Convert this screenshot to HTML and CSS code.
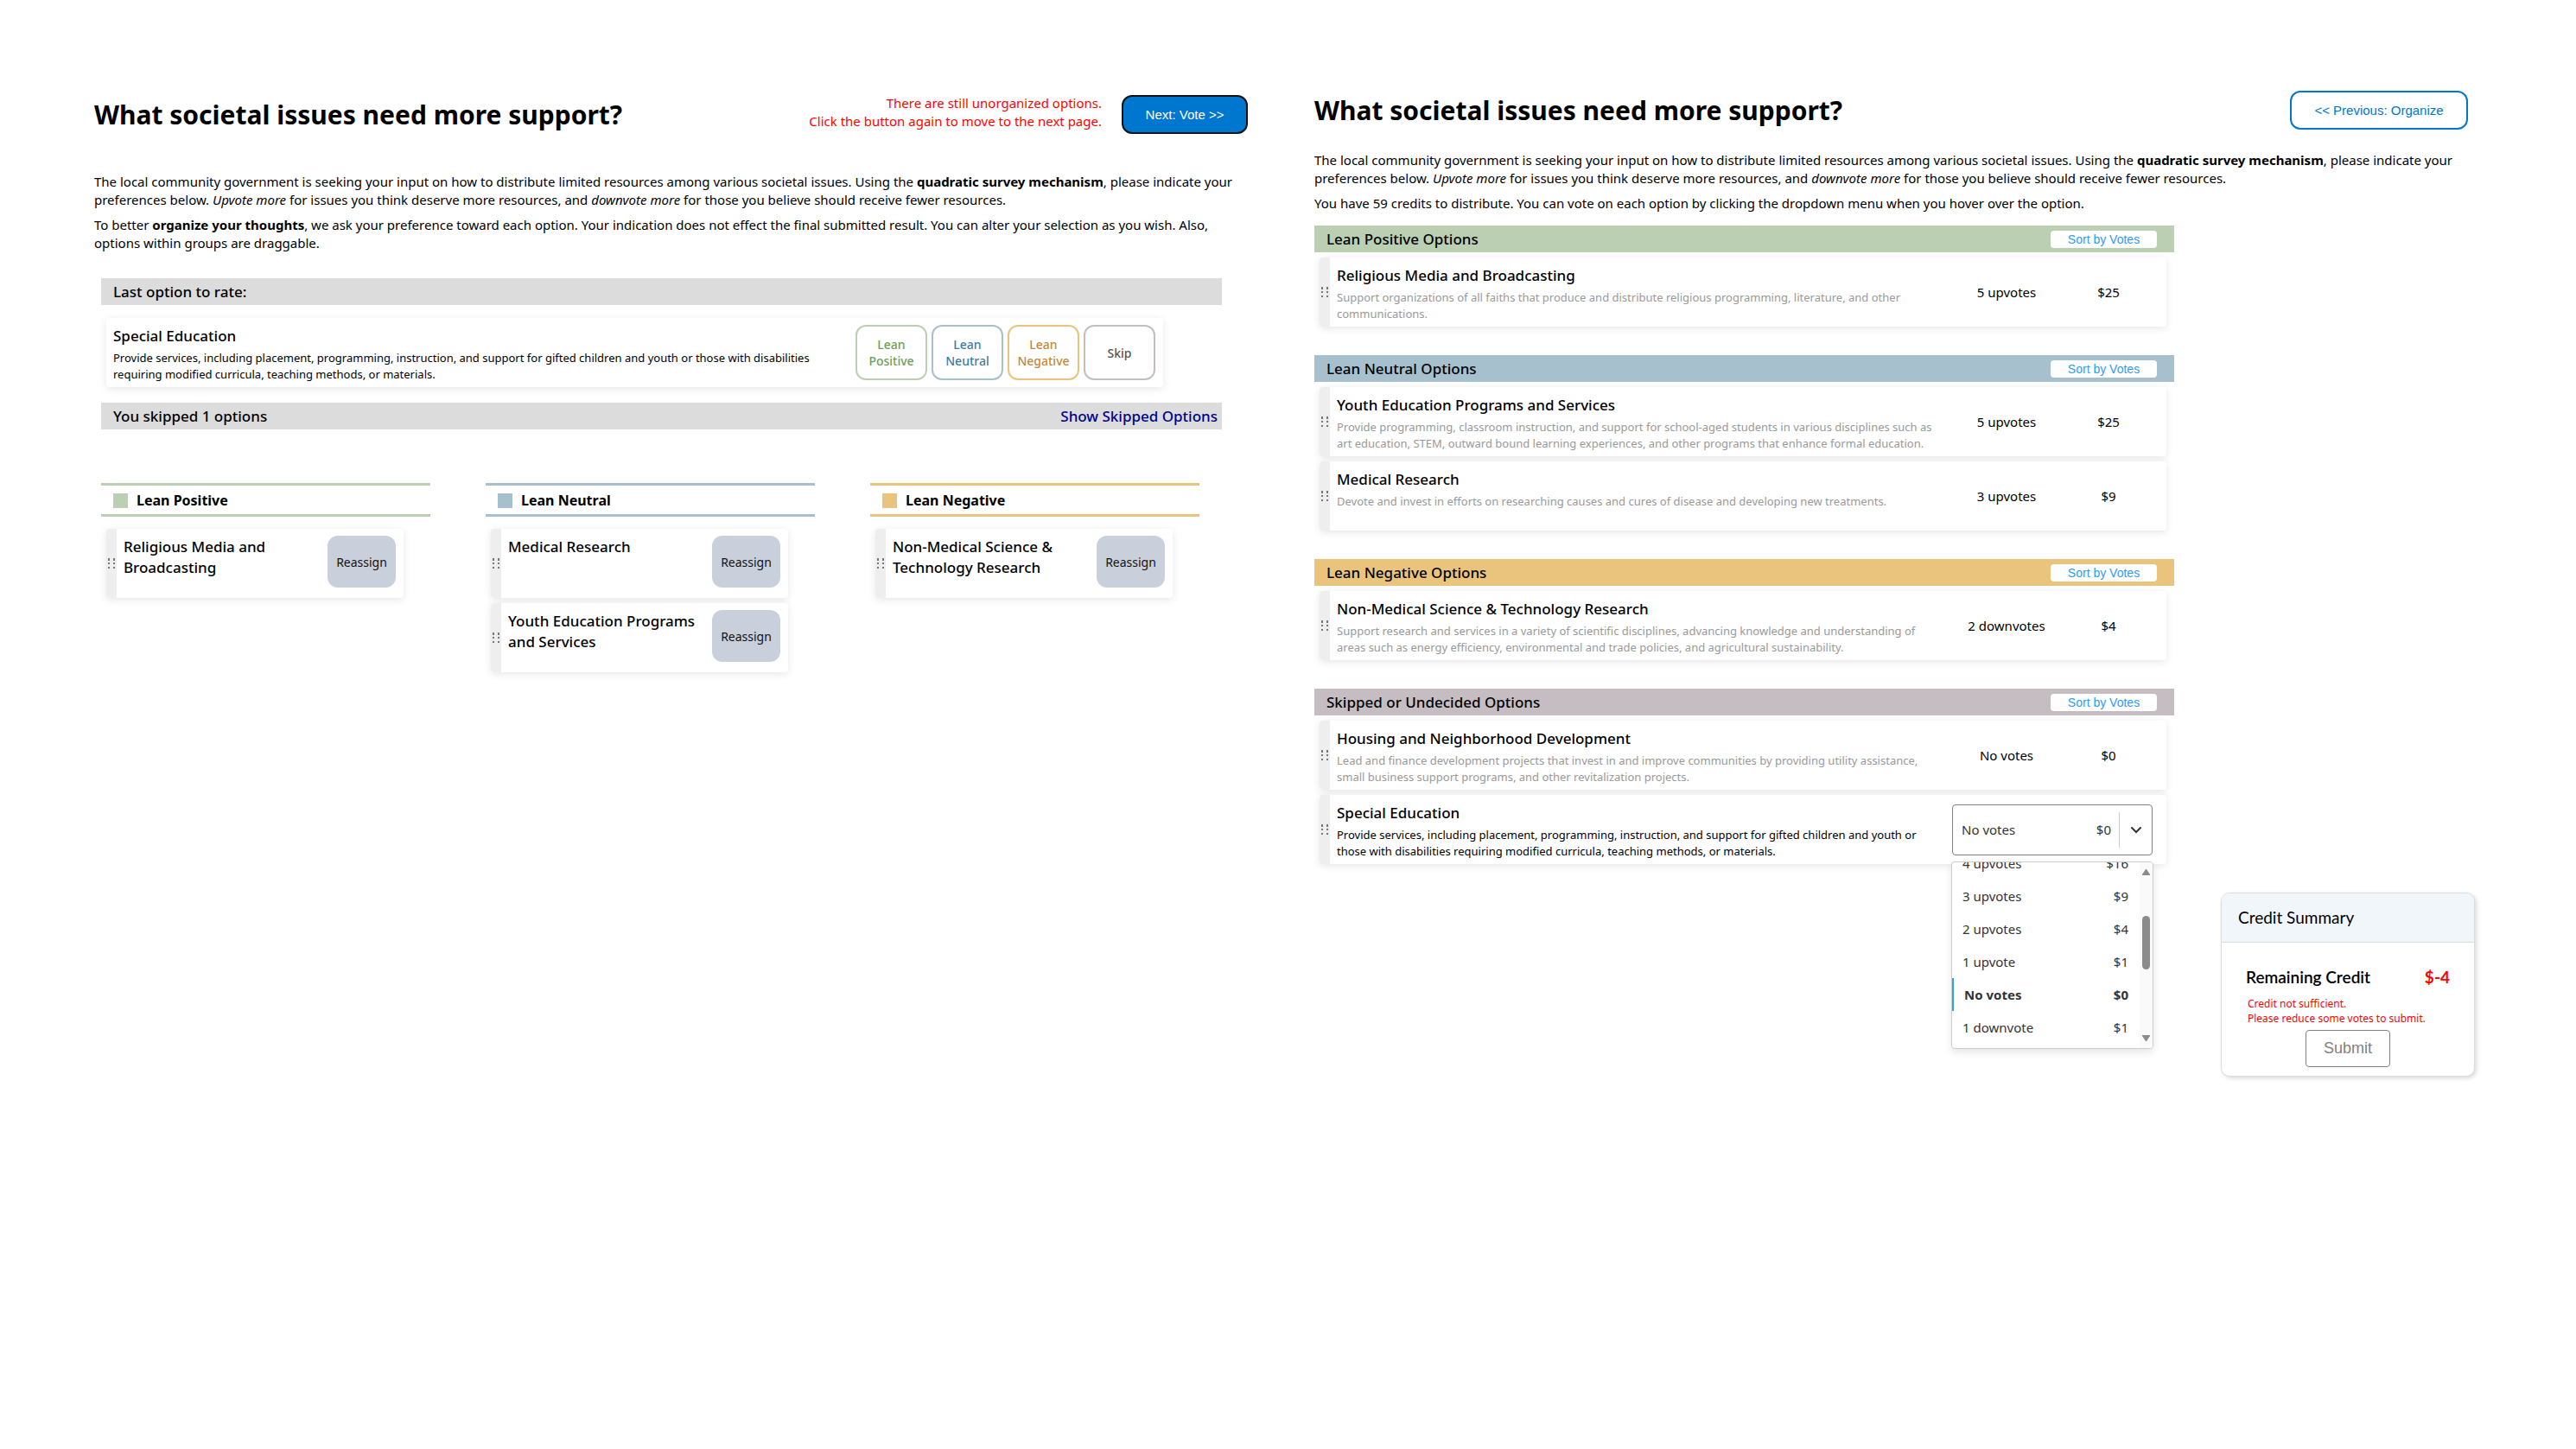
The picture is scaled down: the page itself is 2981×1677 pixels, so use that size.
FILE: index.html
```html
<!DOCTYPE html>
<html lang="en">
<head>
<meta charset="utf-8">
<title>Quadratic survey: organize and vote</title>
<link rel="stylesheet" href="styles.css">
</head>
<body>
<svg class="defs" aria-hidden="true">
  <symbol id="grip" viewBox="0 0 8 12">
    <path d="M0 0h2v3H0zM6 0h2v3H6zM0 5h2v2H0zM6 5h2v2H6zM0 10h2v2H0zM6 10h2v2H6z"/>
  </symbol>
</svg>
<div class="page">

  <section class="panel organize">
    <header class="panel-head">
      <h1>What societal issues need more support?</h1>
      <p class="warning" role="alert">There are still unorganized options.<br>Click the button again to move to the next page.</p>
      <button type="button" class="nav-btn nav-next">Next: Vote &gt;&gt;</button>
    </header>
    <div class="intro">
      <p>The local community government is seeking your input on how to distribute limited resources among various societal issues. Using the <b>quadratic survey mechanism</b>, please indicate your preferences below. <i>Upvote more</i> for issues you think deserve more resources, and <i>downvote more</i> for those you believe should receive fewer resources.</p>
      <p>To better <b>organize your thoughts</b>, we ask your preference toward each option. Your indication does not effect the final submitted result. You can alter your selection as you wish. Also, options within groups are draggable.</p>
    </div>

    <div class="board">
      <h2 class="bar">Last option to rate:</h2>
      <article class="card rate-card">
        <div class="card-text">
          <h3>Special Education</h3>
          <p>Provide services, including placement, programming, instruction, and support for gifted children and youth or those with disabilities requiring modified curricula, teaching methods, or materials.</p>
        </div>
        <div class="choices">
          <button type="button" class="choice positive">Lean Positive</button>
          <button type="button" class="choice neutral">Lean Neutral</button>
          <button type="button" class="choice negative">Lean Negative</button>
          <button type="button" class="choice skip">Skip</button>
        </div>
      </article>
      <div class="bar"><span>You skipped 1 options</span><a href="#skipped">Show Skipped Options</a></div>

      <div class="groups">
        <section class="group positive">
          <h2>Lean Positive</h2>
          <article class="card">
            <span class="handle"><svg><use href="#grip"/></svg></span>
            <div class="card-text"><h3>Religious Media and Broadcasting</h3></div>
            <button type="button" class="reassign">Reassign</button>
          </article>
        </section>
        <section class="group neutral">
          <h2>Lean Neutral</h2>
          <article class="card">
            <span class="handle"><svg><use href="#grip"/></svg></span>
            <div class="card-text"><h3>Medical Research</h3></div>
            <button type="button" class="reassign">Reassign</button>
          </article>
          <article class="card">
            <span class="handle"><svg><use href="#grip"/></svg></span>
            <div class="card-text"><h3>Youth Education Programs and Services</h3></div>
            <button type="button" class="reassign">Reassign</button>
          </article>
        </section>
        <section class="group negative">
          <h2>Lean Negative</h2>
          <article class="card">
            <span class="handle"><svg><use href="#grip"/></svg></span>
            <div class="card-text"><h3>Non-Medical Science &amp; Technology Research</h3></div>
            <button type="button" class="reassign">Reassign</button>
          </article>
        </section>
      </div>
    </div>
  </section>

  <section class="panel vote">
    <header class="panel-head">
      <h1>What societal issues need more support?</h1>
      <button type="button" class="nav-btn nav-prev">&lt;&lt; Previous: Organize</button>
    </header>
    <div class="intro">
      <p>The local community government is seeking your input on how to distribute limited resources among various societal issues. Using the <b>quadratic survey mechanism</b>, please indicate your preferences below. <i>Upvote more</i> for issues you think deserve more resources, and <i>downvote more</i> for those you believe should receive fewer resources.</p>
      <p>You have 59 credits to distribute. You can vote on each option by clicking the dropdown menu when you hover over the option.</p>
    </div>

    <div class="vote-body">
      <div class="vote-lists">
        <section class="vote-group positive">
          <header class="bar"><h2>Lean Positive Options</h2><button type="button" class="sort">Sort by Votes</button></header>
          <article class="card">
            <span class="handle"><svg><use href="#grip"/></svg></span>
            <div class="card-text">
              <h3>Religious Media and Broadcasting</h3>
              <p>Support organizations of all faiths that produce and distribute religious programming, literature, and other communications.</p>
            </div>
            <div class="tally"><span>5 upvotes</span><span>$25</span></div>
          </article>
        </section>

        <section class="vote-group neutral">
          <header class="bar"><h2>Lean Neutral Options</h2><button type="button" class="sort">Sort by Votes</button></header>
          <article class="card">
            <span class="handle"><svg><use href="#grip"/></svg></span>
            <div class="card-text">
              <h3>Youth Education Programs and Services</h3>
              <p>Provide programming, classroom instruction, and support for school-aged students in various disciplines such as art education, STEM, outward bound learning experiences, and other programs that enhance formal education.</p>
            </div>
            <div class="tally"><span>5 upvotes</span><span>$25</span></div>
          </article>
          <article class="card">
            <span class="handle"><svg><use href="#grip"/></svg></span>
            <div class="card-text">
              <h3>Medical Research</h3>
              <p>Devote and invest in efforts on researching causes and cures of disease and developing new treatments.</p>
            </div>
            <div class="tally"><span>3 upvotes</span><span>$9</span></div>
          </article>
        </section>

        <section class="vote-group negative">
          <header class="bar"><h2>Lean Negative Options</h2><button type="button" class="sort">Sort by Votes</button></header>
          <article class="card">
            <span class="handle"><svg><use href="#grip"/></svg></span>
            <div class="card-text">
              <h3>Non-Medical Science &amp; Technology Research</h3>
              <p>Support research and services in a variety of scientific disciplines, advancing knowledge and understanding of areas such as energy efficiency, environmental and trade policies, and agricultural sustainability.</p>
            </div>
            <div class="tally"><span>2 downvotes</span><span>$4</span></div>
          </article>
        </section>

        <section class="vote-group skip">
          <header class="bar"><h2>Skipped or Undecided Options</h2><button type="button" class="sort">Sort by Votes</button></header>
          <article class="card">
            <span class="handle"><svg><use href="#grip"/></svg></span>
            <div class="card-text">
              <h3>Housing and Neighborhood Development</h3>
              <p>Lead and finance development projects that invest in and improve communities by providing utility assistance, small business support programs, and other revitalization projects.</p>
            </div>
            <div class="tally"><span>No votes</span><span>$0</span></div>
          </article>
          <article class="card active">
            <span class="handle"><svg><use href="#grip"/></svg></span>
            <div class="card-text">
              <h3>Special Education</h3>
              <p>Provide services, including placement, programming, instruction, and support for gifted children and youth or those with disabilities requiring modified curricula, teaching methods, or materials.</p>
            </div>
            <div class="picker">
              <div class="picker-box">
                <select aria-label="Votes for Special Education"><option>No votes</option></select>
                <output>$0</output>
                <span class="picker-arrow"><svg viewBox="0 0 12 8" width="12" height="8"><path d="M1 1l5 5 5-5"/></svg></span>
              </div>
              <div class="menu">
                <ul role="listbox" aria-label="Vote choices">
                  <li role="option"><span>4 upvotes</span><span>$16</span></li>
                  <li role="option"><span>3 upvotes</span><span>$9</span></li>
                  <li role="option"><span>2 upvotes</span><span>$4</span></li>
                  <li role="option"><span>1 upvote</span><span>$1</span></li>
                  <li role="option" aria-selected="true"><span>No votes</span><span>$0</span></li>
                  <li role="option"><span>1 downvote</span><span>$1</span></li>
                </ul>
                <div class="scrollbar" aria-hidden="true">
                  <svg viewBox="0 0 9 7" width="9" height="7"><path d="M4 0h1l4 6v1H0V6z"/></svg>
                  <i class="thumb"></i>
                  <svg viewBox="0 0 9 7" width="9" height="7"><path d="M0 0h9v1L5 7H4L0 1z"/></svg>
                </div>
              </div>
            </div>
          </article>
        </section>
      </div>

      <aside class="summary">
        <h2>Credit Summary</h2>
        <div class="summary-body">
          <div class="remaining"><span>Remaining Credit</span><strong>$-4</strong></div>
          <p role="alert">Credit not sufficient.<br>Please reduce some votes to submit.</p>
          <button type="submit" class="submit">Submit</button>
        </div>
      </aside>
    </div>
  </section>

</div>
</body>
</html>
```
FILE: styles.css
```css
* { box-sizing: border-box; }
body {
  margin: 0;
  background: #fff;
  color: #000;
  font: 15px/21px "Noto Sans", "Open Sans", sans-serif;
}
h1, h2, h3, p, ul { margin: 0; padding: 0; }
button { font: inherit; margin: 0; padding: 0; cursor: pointer; }
.defs { display: none; }

.positive { --tone: #bbcfb2; --ink: #6ba05a; }
.neutral { --tone: #a6c0cd; --ink: #3a7ca5; }
.negative { --tone: #eac47c; --ink: #bf8a3c; }
.skip { --tone: #c5bdc1; --ink: #555; }

.page {
  display: grid;
  grid-template-columns: minmax(0, 1fr) minmax(0, 1fr);
  gap: 77px;
  padding: 105px 125px 60px 109px;
}
.organize { padding-top: 4px; }

/* Panel heading */
.panel-head { display: flex; align-items: center; min-height: 45px; }
h1 { flex: 1; font-size: 30px; line-height: 45px; font-weight: 700; }
.warning { color: #f00; text-align: right; padding-bottom: 4px; margin-right: 23px; }
.nav-btn {
  height: 45px;
  border: 2px solid #0077cf;
  border-radius: 12px;
  font: 15px "Liberation Sans", Arial, sans-serif;
}
.nav-next { width: 146px; background: #0077cf; border-color: #111; color: #fff; }
.nav-prev { width: 206px; background: #fff; color: #0077cf; }

.intro { display: grid; gap: 8px; }
.organize .intro { padding: 45px 0 30px; }
.vote .intro { padding: 25px 0 15px; }

/* Bars and cards */
.bar {
  display: flex;
  align-items: center;
  justify-content: space-between;
  height: 31px;
  padding: 0 5px 0 14px;
  background: #dcdcdc;
  font-size: 17px;
  font-weight: 500;
}
.bar a { color: #00008b; text-decoration: none; }
.card {
  display: flex;
  min-height: 80px;
  background: #fff;
  border-radius: 4px;
  box-shadow: 0 2px 10px rgba(0, 0, 0, .1);
}
.card-text { flex: 1; min-width: 0; padding: 9px 8px 0; }
.card h3 { font-size: 17px; line-height: 24px; font-weight: 500; }
.card p { font-size: 13px; line-height: 19px; margin-top: 4px; }
.handle {
  display: flex;
  align-items: center;
  justify-content: center;
  width: 12px;
  background: #eee;
  border-radius: 4px 0 0 4px;
}
.handle svg { width: 8px; height: 12px; fill: #777; }

/* Organize panel */
.board { margin: 0 30px 0 8px; }
.rate-card { margin: 15px 68px 18px 6px; padding-right: 9px; }
.rate-card .card-text { padding-right: 34px; }
.choices { display: flex; gap: 5px; align-self: center; }
.choice {
  width: 83px;
  height: 64px;
  background: #fff;
  border: 2px solid var(--tone);
  border-radius: 12px;
  color: var(--ink);
  font-size: 14px;
  line-height: 19px;
  font-weight: 500;
}
.groups {
  display: grid;
  grid-template-columns: repeat(3, minmax(0, 1fr));
  gap: 64px;
  margin: 62px 26px 0 0;
}
.group h2 {
  display: flex;
  align-items: center;
  gap: 10px;
  height: 39px;
  margin-bottom: 14px;
  padding: 2px 0 0 14px;
  border: solid var(--tone);
  border-width: 3px 0;
  font-size: 16px;
  font-weight: 700;
}
.group h2::before { content: ""; width: 17px; height: 17px; background: var(--tone); }
.group .card { margin: 0 31px 6px 6px; }
.reassign {
  width: 79px;
  height: 60px;
  margin: 8px 9px 0 0;
  border: 0;
  border-radius: 12px;
  background: #cacfdc;
  color: #111;
  font-size: 14px;
}

/* Vote panel */
.vote-body {
  display: grid;
  grid-template-columns: minmax(0, 1fr) 294px;
  gap: 54px;
  margin-right: -8px;
}
.vote-lists { display: grid; gap: 33px; padding-bottom: 246px; }
.vote-group { display: grid; gap: 6px; }
.vote-group .bar { background: var(--tone); padding-right: 20px; }
.bar h2 { font-size: 17px; font-weight: 500; }
.sort {
  width: 123px;
  height: 20px;
  border: 0;
  border-radius: 4px;
  background: #fff;
  color: #2b9cf5;
  font: 14px "Liberation Sans", Arial, sans-serif;
}
.vote-group .card { margin: 0 9px 0 6px; }
.vote-group .card-text { padding-right: 13px; }
.vote-group p { color: #999; }
.vote-group .active p { color: #000; }
.tally {
  display: grid;
  grid-template-columns: 130px 106px;
  align-items: center;
  margin-right: 14px;
  text-align: center;
}
.picker { position: relative; width: 232px; margin: 11px 16px 0 4px; color: #333; }
.picker-box {
  display: flex;
  align-items: center;
  height: 59px;
  border: 1px solid #808080;
  border-radius: 4px;
}
.picker select {
  flex: 1;
  appearance: none;
  border: 0;
  margin: 0;
  padding: 0 0 0 10px;
  background: none;
  color: inherit;
  font: inherit;
}
.picker-arrow {
  display: flex;
  align-items: center;
  justify-content: center;
  width: 38px;
  height: 41px;
  margin-left: 9px;
  border-left: 1px solid #ccc;
}
.picker-arrow path { fill: none; stroke: #333; stroke-width: 2; stroke-linecap: round; }
.menu {
  position: absolute;
  z-index: 1;
  top: 66px;
  left: -1px;
  right: -1px;
  display: flex;
  height: 217px;
  overflow: hidden;
  background: #fff;
  border: 1px solid #ccc;
  border-radius: 4px;
  box-shadow: 0 4px 10px rgba(0, 0, 0, .1);
}
.menu ul { flex: 1; list-style: none; margin-top: -18px; }
.menu li {
  display: flex;
  align-items: center;
  justify-content: space-between;
  height: 38px;
  padding: 0 13px 0 12px;
}
.menu [aria-selected] { border-left: 2px solid #2aa3f7; font-weight: 700; }
.scrollbar {
  display: flex;
  flex-direction: column;
  align-items: center;
  justify-content: space-between;
  width: 15px;
  padding: 8px 0;
  background: #fafafa;
}
.scrollbar svg { fill: #8b8b8b; }
.thumb { width: 9px; height: 62px; margin-bottom: 30px; border-radius: 5px; background: #8b8b8b; }

/* Credit summary */
.summary {
  align-self: end;
  border: 1px solid #dcdcdc;
  border-radius: 10px;
  overflow: hidden;
  background: #fff;
  box-shadow: 2px 2px 5px rgba(0, 0, 0, .15);
}
.summary h2 {
  height: 57px;
  padding-left: 19px;
  border-bottom: 1px solid #dcdcdc;
  background: #f1f6fa;
  font: 400 19px/56px Lato, sans-serif;
}
.summary-body { padding: 28px 28px 10px; }
.remaining {
  display: flex;
  justify-content: space-between;
  font: 600 19px/24px Lato, sans-serif;
}
.remaining strong { color: #f00; font-weight: 700; }
.summary p { margin: 10px 0 5px 2px; color: #f00; font-size: 12px; line-height: 17px; }
.submit {
  display: block;
  width: 98px;
  height: 43px;
  margin: 0 auto;
  border: 1px solid #808080;
  border-radius: 4px;
  background: #fff;
  color: #808080;
  font: 18px "Liberation Sans", Arial, sans-serif;
}
```
